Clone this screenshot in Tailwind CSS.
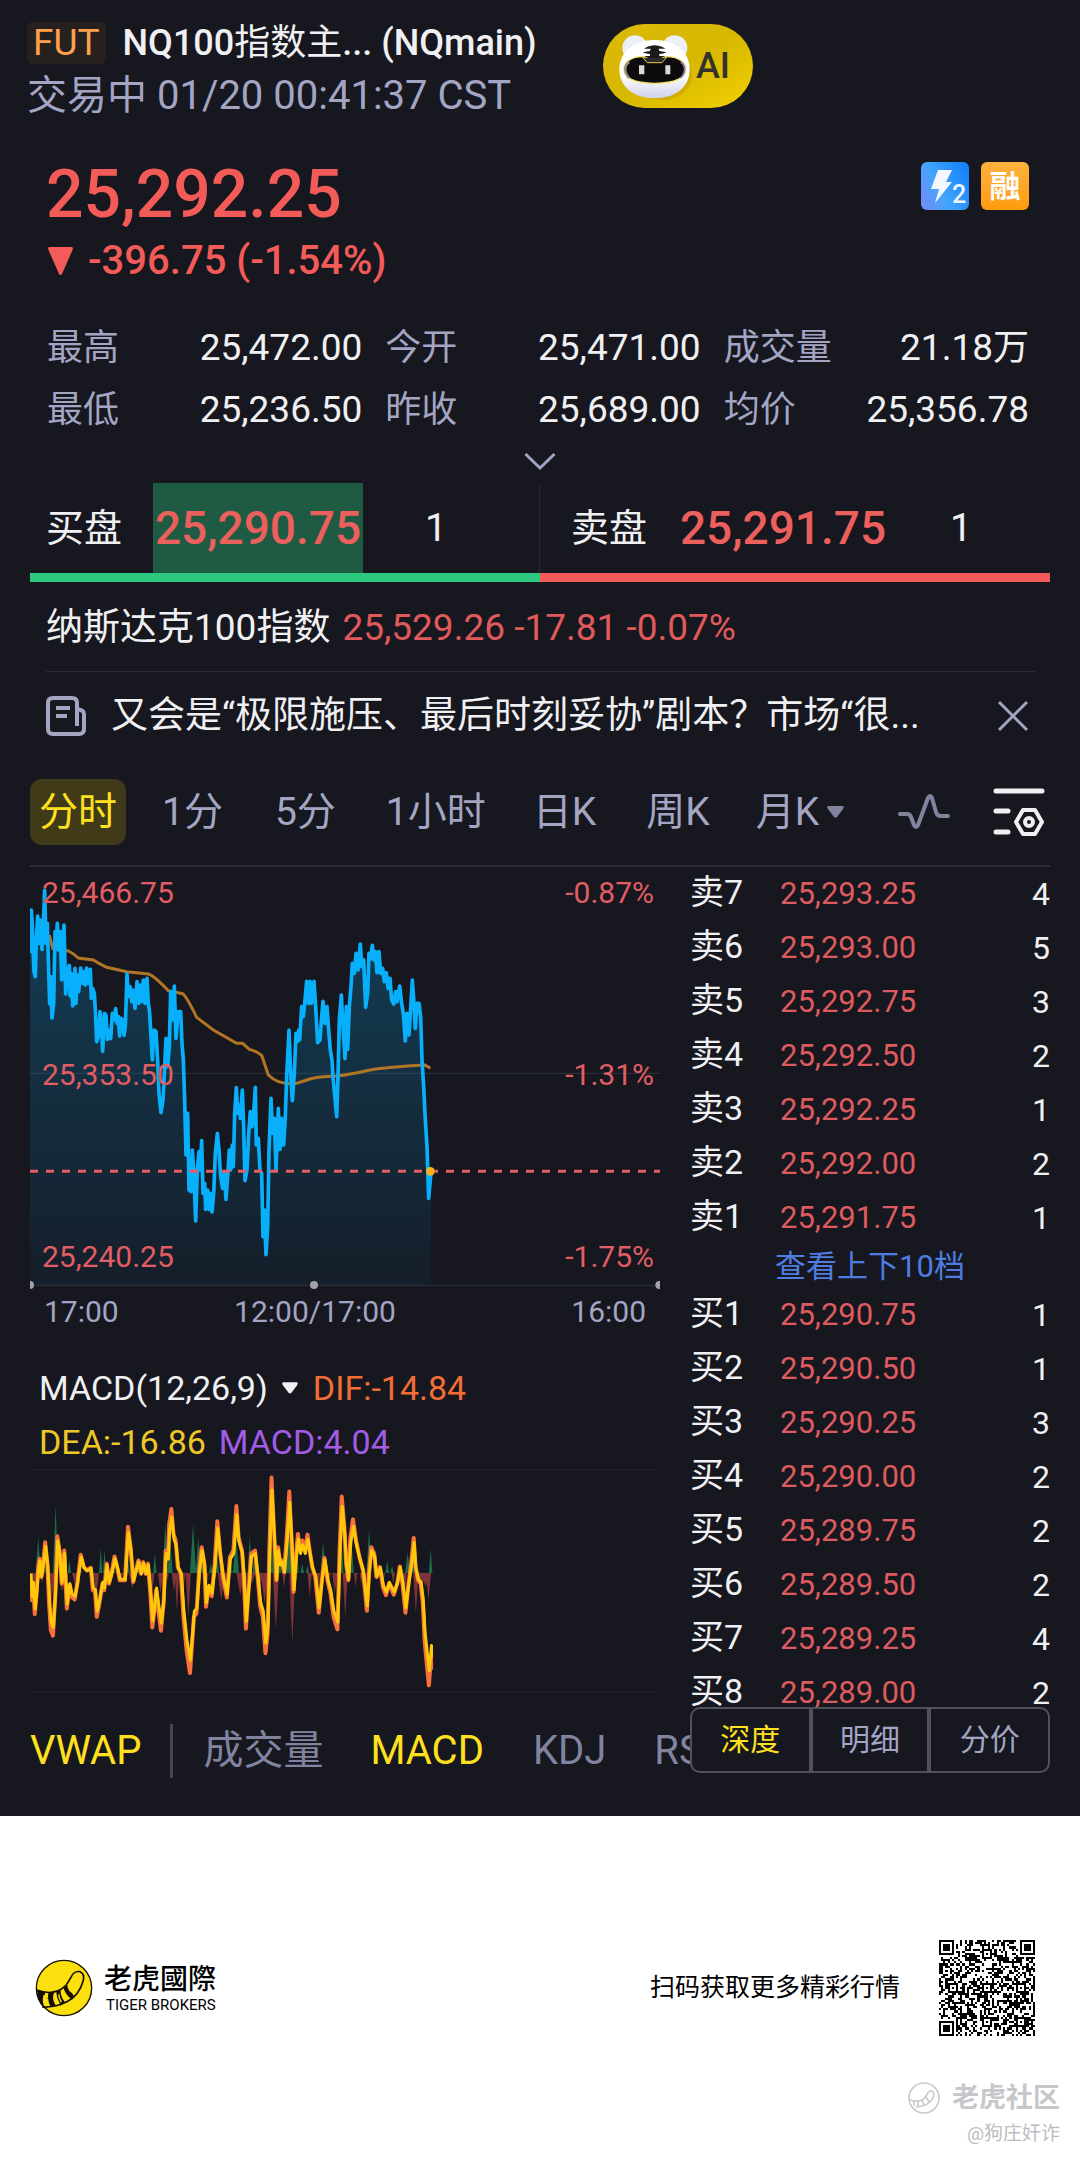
<!DOCTYPE html>
<html lang="zh-CN">
<head>
<meta charset="utf-8">
<meta name="viewport" content="width=device-width, initial-scale=1">
<title>NQ100指数主连 (NQmain)</title>
<script src="https://cdn.jsdelivr.net/npm/@tailwindcss/browser@4"></script>
</head>
<body class="bg-white font-[Roboto,'Noto_Sans_CJK_SC',sans-serif] text-[#f0f0f3]">
<main class="bg-[#16171f] pb-[6px]">

  <!-- Header -->
  <header class="relative px-[27px] pt-5">
    <h1 class="flex h-[46px] items-center gap-[17px] text-[36px] leading-[46px] font-medium">
      <span class="rounded-md bg-[#26211f] px-[6px] text-[37px] leading-[42px] font-normal text-[#ffa04c]">FUT</span>
      <span>NQ100<span class="font-normal">指数主</span>... (NQmain)</span>
    </h1>
    <p class="mt-[5px] text-[40px] leading-[50px] text-[#a3a5c3]">交易中 01/20 00:41:37 CST</p>
    <button class="absolute top-6 left-[603px] flex h-[84px] w-[150px] items-center rounded-full bg-linear-to-br from-[#dcb90a] via-[#d6b800] to-[#f3d000] pl-[14px]" aria-label="AI">
      <svg class="h-[68px] w-[75px]" viewBox="113 98 225 204" aria-hidden="true">
        <defs>
          <linearGradient id="face" x1="0" y1="0" x2="0" y2="1"><stop offset=".6" stop-color="#fff"/><stop offset="1" stop-color="#cfd2ea"/></linearGradient>
        </defs>
        <ellipse cx="250" cy="225" rx="88" ry="78" fill="#b98b00" opacity=".35"/>
        <circle cx="167" cy="146" r="38" fill="#eceef8"/><circle cx="286" cy="146" r="38" fill="#eceef8"/>
        <path d="M226 122c-62 0-106 36-106 88 0 54 44 87 106 87s105-33 105-87c0-52-43-88-105-88z" fill="url(#face)"/>
        <path d="M134 210c0-22 22-38 56-38h72c34 0 57 16 57 38 0 25-30 42-93 42s-92-17-92-42z" fill="#0d0b0c" stroke="#f5e06a" stroke-width="4"/>
        <path d="M190 174h72l-14 16h-44z" fill="#2a2a2e" stroke="#e8cf3c" stroke-width="3"/>
        <path d="M204 142q22-9 44 0l10 6h-20l2 7 22 4q-10 5-22 5v6h18l-14 6h-36l-14-6h18v-6q-12 0-22-5l22-4 2-7h-20z" fill="#1a1a1c"/>
        <path d="M150 188q-12 8-12 22t12 26" fill="none" stroke="#8f8f94" stroke-width="7"/>
        <path d="M304 188q12 8 12 22t-12 26" fill="none" stroke="#8a7bb0" stroke-width="5"/>
        <path d="M179 198h16v27h-16zM258 198h15v27h-15z" fill="#d9d9dd"/>
      </svg>
      <span class="ml-1 text-[36px] leading-[44px] font-medium text-[#33322c]">AI</span>
    </button>
  </header>

  <!-- Last price -->
  <section class="flex items-start justify-between pt-[37px] pr-[51px] pl-[46px] font-medium text-[#f25b58]">
    <div>
      <p class="text-[66px] leading-[73px]">25,292.25</p>
      <p class="mt-[6px] flex items-center text-[40px] leading-[48px]">
        <svg class="mr-[15px] ml-[2px] h-[28px] w-[25px]" viewBox="0 0 25 28" fill="currentColor" aria-hidden="true"><path d="M2 0h21q3 0 1.500 3L14 27q-1.500 2-3 0L.5 3Q-1 0 2 0z"/></svg>
        -396.75 (-1.54%)
      </p>
    </div>
    <div class="mt-1 flex gap-3">
      <svg class="size-12" viewBox="0 0 48 48" role="img" aria-label="Level 2">
        <defs><linearGradient id="lv" x1="0" y1=".8" x2="1" y2=".3"><stop offset="0" stop-color="#6f8df8"/><stop offset=".4" stop-color="#43a6fb"/><stop offset="1" stop-color="#1683fb"/></linearGradient></defs>
        <rect width="48" height="48" rx="6" fill="url(#lv)"/>
        <path d="M17 8h14l-6 12h6L14 41l4-14h-8z" fill="#f3f8ff"/>
        <text x="31" y="41" font-size="25" font-weight="500" fill="#eef5ff">2</text>
      </svg>
      <span class="flex size-12 items-center justify-center rounded-md bg-linear-to-b from-[#fdb13c] to-[#ff9c08] text-[31px] leading-none font-bold text-white">融</span>
    </div>
  </section>

  <!-- Key figures -->
  <dl class="mt-[32px] grid grid-cols-[316fr_316fr_306fr] gap-x-[23px] pr-[51px] pl-[47px] text-[37px] leading-[62px]">
    <div class="flex justify-between"><dt class="text-[36px] text-[#a3a5c3]">最高</dt><dd>25,472.00</dd></div>
    <div class="flex justify-between"><dt class="text-[36px] text-[#a3a5c3]">今开</dt><dd>25,471.00</dd></div>
    <div class="flex justify-between"><dt class="text-[36px] text-[#a3a5c3]">成交量</dt><dd>21.18<span class="text-[36px]">万</span></dd></div>
    <div class="flex justify-between"><dt class="text-[36px] text-[#a3a5c3]">最低</dt><dd>25,236.50</dd></div>
    <div class="flex justify-between"><dt class="text-[36px] text-[#a3a5c3]">昨收</dt><dd>25,689.00</dd></div>
    <div class="flex justify-between"><dt class="text-[36px] text-[#a3a5c3]">均价</dt><dd>25,356.78</dd></div>
  </dl>
  <button class="flex h-[42px] w-full items-center justify-center" aria-label="展开">
    <svg class="h-[20px] w-[32px]" viewBox="0 0 32 20" fill="none" stroke="#a3a5c3" stroke-width="3" aria-hidden="true"><path d="M1.500 2 16 16 30.500 2"/></svg>
  </button>

  <!-- Best bid / ask -->
  <section class="mx-[30px] grid grid-cols-2">
    <div class="flex h-[90px] items-center border-r border-[#282932] pl-4 text-[38px] leading-[48px]">
      <span>买盘</span>
      <strong class="ml-[31px] flex h-full w-[210px] items-center justify-center bg-[#1f5b42] text-[46px] font-medium text-[#eb5f5c]">25,290.75</strong>
      <span class="ml-[62px] text-[39px]">1</span>
    </div>
    <div class="flex h-[90px] items-center pl-[31px] text-[38px] leading-[48px]">
      <span>卖盘</span>
      <strong class="ml-[31px] flex h-full w-[210px] items-center justify-center text-[46px] font-medium text-[#eb5f5c]">25,291.75</strong>
      <span class="ml-[62px] text-[39px]">1</span>
    </div>
    <div class="h-[9px] bg-[#2cc880]"></div>
    <div class="h-[9px] bg-[#f25b58]"></div>
  </section>

  <!-- Index and news -->
  <section class="mr-[45px] ml-[46px] text-[37px] leading-[48px]">
    <p class="flex h-[90px] items-center gap-3 border-b border-[#2a2b34] pt-[2px]">
      <span>纳斯达克100指数</span><span class="text-[#e05a5b]">25,529.26 -17.81 -0.07%</span>
    </p>
    <div class="flex h-[87px] items-center">
      <svg class="h-[40px] w-[40px] shrink-0" viewBox="0 0 40 40" fill="none" stroke="#a3a5c3" stroke-width="4" aria-hidden="true"><path d="M31 30V7q0-5-5-5H7Q2 2 2 7v26q0 5 5 5h26q5 0 5-5V18q0-4-7-5"/><path d="M10 12h14M10 20h11"/></svg>
      <a href="#" class="ml-[25px] truncate">又会是“极限施压、最后时刻妥协”剧本？市场“很...</a>
      <button class="mr-[6px] ml-auto" aria-label="关闭"><svg class="size-[32px]" viewBox="0 0 32 32" stroke="#a3a5c3" stroke-width="3" aria-hidden="true"><path d="M2 2l28 28M30 2 2 30"/></svg></button>
    </div>
  </section>

  <!-- Period tabs -->
  <nav class="mx-[30px] flex h-[108px] items-center border-b-2 border-[#2c2d35] text-[39px] leading-[50px] text-[#a3a5c3]">
    <button class="mr-[11px] h-[66px] rounded-xl bg-[#403a19] px-[9px] text-[#ffe01e]">分时</button>
    <button class="px-[25px]">1分</button>
    <button class="px-[27px]">5分</button>
    <button class="px-[23px]">1小时</button>
    <button class="px-[24px]">日K</button>
    <button class="px-[26px]">周K</button>
    <button class="flex items-center gap-[8px] pl-5">月K
      <svg class="h-[12px] w-[17px]" viewBox="0 0 17 12" fill="#82849f" aria-hidden="true"><path d="M2 0h13q3 0 1 3l-6 8q-1.500 1.500-3 0L1 3Q-1 0 2 0z"/></svg>
    </button>
    <button class="ml-auto" aria-label="画线"><svg class="h-[36px] w-[52px]" viewBox="0 0 52 36" fill="none" stroke="#82849f" stroke-width="4" stroke-linejoin="round" stroke-linecap="round" aria-hidden="true"><path d="M2 20h7q3 0 4 3l3 8q2 4 4 0L30 4q2-4 4 0l4 14q1 4 5 4h7"/></svg></button>
    <button class="mr-[5px] ml-[43px]" aria-label="设置"><svg class="h-[49px] w-[52px]" viewBox="0 0 52 49" fill="none" stroke="#f0f0f3" stroke-width="5" stroke-linecap="round" aria-hidden="true"><path d="M3 3h46M3 23h12M3 44h12"/><path d="M30 22h12l7 12-7 12H30l-7-12z" stroke-width="4" stroke-linejoin="round"/><circle cx="36" cy="34" r="4" stroke-width="4"/></svg></button>
  </nav>

  <div class="grid grid-cols-[660fr_360fr] px-[30px]">
    <!-- Charts -->
    <section class="min-w-0">
      <div class="relative mr-[30px] h-[423px] text-[30px] leading-[36px] text-[#e25d64]">
        <svg class="absolute inset-0 h-full w-full" viewBox="30 21 1890 1269" preserveAspectRatio="none" fill="none" role="img" aria-label="分时走势">
          <defs><linearGradient id="area" gradientUnits="userSpaceOnUse" x1="0" y1="100" x2="0" y2="1276"><stop offset="0" stop-color="#08a7ee" stop-opacity=".27"/><stop offset="1" stop-color="#08a7ee" stop-opacity=".05"/></linearGradient></defs>
          <path d="M30 640H1920M30 1276H1920" stroke="#2f343b" stroke-width="3"/>
          <path id="price-area" fill="url(#area)"/>
          <path d="M88 225 98 265 145 273Q160 280 175 294L220 300Q235 310 260 322L320 335 385 342Q400 345 445 392L488 401Q500 410 530 472L580 510 650 550H668L688 568Q712 574 725 586L745 645Q775 676 830 670L860 660Q885 650 950 648 990 644 1050 630 1100 621 1215 615L1231 625" stroke="#b27526" stroke-width="9"/>
          <path id="price-line" stroke="#08b0fc" stroke-width="11" stroke-linejoin="round"/>
          <path d="M30 934H1920" stroke="#e25d64" stroke-width="9" stroke-dasharray="24 24"/>
          <circle cx="1231" cy="934" r="13" fill="#fdb01d"/>
          <g fill="#a2a3a8"><circle cx="30" cy="1275" r="12"/><circle cx="882" cy="1275" r="12"/><circle cx="1918" cy="1275" r="12"/></g>
        </svg>
        <div class="relative flex h-full flex-col justify-between pt-[8px] pr-[6px] pb-[15px] pl-3">
          <p class="flex justify-between"><span>25,466.75</span><span>-0.87%</span></p>
          <p class="flex justify-between"><span>25,353.50</span><span>-1.31%</span></p>
          <p class="flex justify-between"><span>25,240.25</span><span>-1.75%</span></p>
        </div>
      </div>
      <div class="mr-[30px] grid grid-cols-[1fr_auto_1fr] pt-1 pr-[14px] pl-[14px] text-[30px] leading-[36px] text-[#a3a5c3]">
        <span>17:00</span><span class="pr-[60px]">12:00/17:00</span><span class="text-right">16:00</span>
      </div>

      <div class="mt-[31px] flex h-[54px] items-center pl-[9px] text-[34px] leading-[54px]">
        <button class="flex items-center gap-[14px]">MACD(12,26,9)
          <svg class="h-[12px] w-[16px]" viewBox="0 0 17 12" fill="currentColor" aria-hidden="true"><path d="M2 0h13q3 0 1 3l-6 8q-1.500 1.500-3 0L1 3Q-1 0 2 0z"/></svg>
        </button>
        <span class="ml-[15px] text-[#f36d35]">DIF:-14.84</span>
      </div>
      <div class="flex h-[54px] items-center gap-[13px] pl-[9px] text-[34px] leading-[54px]">
        <span class="text-[#edc827]">DEA:-16.86</span><span class="text-[#a25ce6]">MACD:4.04</span>
      </div>
      <div class="mr-[30px] h-[223px] border-y border-[#20212a]">
        <svg class="h-full w-full" viewBox="69 357 1453 667" preserveAspectRatio="none" fill="none" role="img" aria-label="MACD">
          <path id="hist-up" fill="#1c6b49"/><path id="hist-down" fill="#7d3338"/>
          <path id="dif" stroke="#f8703a" stroke-width="4" vector-effect="non-scaling-stroke" stroke-linejoin="round"/>
          <path id="dea" stroke="#ffc90a" stroke-width="3" vector-effect="non-scaling-stroke" stroke-linejoin="round"/>
        </svg>
      </div>

      <nav class="flex h-[118px] items-center overflow-hidden text-[40px] leading-[50px] whitespace-nowrap text-[#82849f]">
        <button class="text-[#ffe01e]">VWAP</button>
        <span class="mr-[30px] ml-[29px] h-[54px] w-[3px] shrink-0 bg-[#45464e]"></span>
        <button>成交量</button>
        <button class="ml-[47px] text-[#ffe01e]">MACD</button>
        <button class="ml-[49px]">KDJ</button>
        <button class="ml-[48px]">RSI</button>
      </nav>
    </section>

    <!-- Order book -->
    <section class="flex flex-col">
      <div class="h-[840px] overflow-hidden">
        <table class="w-full table-fixed border-collapse leading-[54px]">
          <colgroup><col class="w-[90px]"><col><col class="w-[60px]"></colgroup>
          <tbody id="book"></tbody>
        </table>
      </div>
      <div class="grid h-[66px] grid-cols-3 rounded-[10px] border-2 border-[#50515d] text-[30px] leading-[40px] text-[#a3a5c3]">
        <button class="border-r-2 border-[#50515d] text-[#ffe01e]">深度</button>
        <button class="border-x-2 border-[#50515d]">明细</button>
        <button class="border-l-2 border-[#50515d]">分价</button>
      </div>
    </section>
  </div>
</main>

<!-- Share footer -->
<footer class="pr-[20px] pl-[35px] text-black">
  <div class="flex items-center pt-[124px] pr-[25px]">
    <svg class="size-[58px]" viewBox="106 115 176 176" fill="none" stroke="#140d05" aria-hidden="true">
      <circle cx="194" cy="203" r="84" fill="#fbe00d" stroke-width="4"/>
      <path d="M111 209q55 20 88-13 8-10 16-25 8-20 26-18 17 6 11 29-12 44-48 62-33 18-76 17" stroke-width="5"/>
      <path d="M112 208l25 9q-5 14 8 18-10 14-4 28l-12-4q-14-16-17-51zM147 217l17-2q-8 22 5 41l-16 4q-11-24-6-43zM171 213l13-5q-2 20 13 38l-14 7q-13-22-12-40zM193 204l11-10q2 18 14 24l6 9-10 8q-16-13-21-31z" fill="#140d05" stroke="none"/>
      <path d="M132 224l8 1q-1 9 6 12-7 9-5 22l-8-2q-6-16-1-33zM176 222l4-1q1 14 8 23l-4 3q-8-12-8-25z" fill="#fbe00d" stroke="none"/>
    </svg>
    <div class="ml-[11px]">
      <p class="text-[28px] leading-[34px] font-medium">老虎國際</p>
      <p class="pl-[2px] text-[15px] leading-[16px]">TIGER BROKERS</p>
    </div>
    <p class="ml-auto text-[25px] leading-[36px]">扫码获取更多精彩行情</p>
    <svg id="qr" class="ml-[39px] size-[96px]" viewBox="0 0 45 45" shape-rendering="crispEdges" role="img" aria-label="二维码"><path fill="#000"/></svg>
  </div>
  <div class="mt-[44px] flex items-center justify-end gap-3 text-[27px] leading-[36px] font-bold text-[#c6c7cb]">
    <svg class="size-[32px]" viewBox="0 0 32 32" fill="none" stroke="currentColor" stroke-width="1.500" aria-hidden="true"><circle cx="16" cy="16" r="15"/><path d="M2 18q11 4 16-4 3-6 6-5 3 2 1 7-4 8-17 9M6 19v5M10 20v4M14 18l2 5M18 15l3 5"/></svg>
    <span>老虎社区</span>
  </div>
  <p class="mt-[2px] text-right text-[19px] leading-[32px] text-[#bcbdc1]">@狗庄奸诈</p>
</footer>

<script>
const $ = id => document.getElementById(id);

// Order book rows: label, price, size
const asks = [['卖7','25,293.25',4],['卖6','25,293.00',5],['卖5','25,292.75',3],['卖4','25,292.50',2],['卖3','25,292.25',1],['卖2','25,292.00',2],['卖1','25,291.75',1]];
const bids = [['买1','25,290.75',1],['买2','25,290.50',1],['买3','25,290.25',3],['买4','25,290.00',2],['买5','25,289.75',2],['买6','25,289.50',2],['买7','25,289.25',4],['买8','25,289.00',2]];
const row = ([l, p, n]) => `<tr class="h-[54px]"><th scope="row" class="p-0 text-left align-top text-[34px] leading-[50px] font-normal">${l}</th><td class="p-0 text-[31px] text-[#dd5b5e]">${p}</td><td class="p-0 text-right text-[32px]">${n}</td></tr>`;
$('book').innerHTML = asks.map(row).join('')
  + '<tr class="h-[43px]"><td colspan="3" class="p-0 text-center text-[31px] leading-[43px] text-[#4f7ce0]"><a href="#">查看上下10档</a></td></tr>'
  + bids.map(row).join('');

const line = pts => 'M' + pts.map(p => p.join(' ')).join('L');

// Intraday price
const price = [[32,280],[34,150],[37,200],[40,280],[42,335],[46,350],[49,240],[53,168],[57,250],[61,180],[66,268],[70,190],[74,92],[78,250],[82,190],[86,330],[89,432],[92,350],[96,474],[101,430],[105,215],[108,270],[112,190],[117,270],[121,215],[125,360],[129,240],[132,195],[137,402],[142,330],[148,316],[150,408],[154,340],[158,438],[162,430],[165,325],[168,430],[172,345],[176,395],[182,324],[188,370],[192,335],[196,375],[200,324],[206,370],[211,328],[214,415],[218,385],[223,400],[226,450],[230,545],[235,530],[240,455],[244,500],[248,574],[253,460],[258,465],[262,538],[268,510],[272,536],[277,460],[282,480],[287,446],[291,490],[295,470],[299,528],[303,475],[308,480],[312,526],[316,500],[321,342],[325,410],[330,380],[335,425],[339,390],[345,445],[351,365],[356,430],[361,375],[365,425],[370,360],[375,430],[381,355],[385,430],[389,460],[393,530],[397,600],[402,510],[408,515],[413,600],[417,700],[423,758],[429,720],[433,640],[438,535],[443,620],[448,560],[452,395],[457,480],[463,378],[468,535],[474,455],[482,455],[486,550],[490,600],[494,720],[498,885],[503,760],[507,990],[513,995],[517,870],[521,930],[527,1083],[532,930],[537,875],[541,930],[545,842],[549,1000],[554,970],[557,1048],[563,990],[567,1048],[571,1000],[576,1056],[581,1000],[586,880],[592,820],[597,870],[602,950],[608,985],[613,940],[618,1018],[623,950],[628,870],[632,930],[637,855],[640,920],[644,760],[649,683],[653,760],[659,735],[661,775],[667,690],[671,800],[675,962],[681,930],[686,820],[691,755],[696,800],[701,760],[706,682],[709,855],[715,835],[720,930],[725,940],[729,1130],[733,1050],[738,1184],[743,1100],[747,870],[753,715],[758,820],[763,775],[768,930],[775,745],[780,868],[785,775],[791,855],[796,770],[800,650],[807,510],[812,640],[817,722],[823,640],[828,520],[832,545],[836,510],[839,540],[845,440],[850,470],[855,420],[860,364],[865,430],[870,364],[874,430],[882,364],[887,440],[893,548],[900,540],[905,470],[909,424],[915,490],[921,440],[926,510],[931,570],[936,600],[939,650],[944,705],[950,770],[954,650],[958,480],[964,405],[968,480],[975,596],[979,440],[983,568],[988,440],[993,380],[997,310],[1003,340],[1008,280],[1014,330],[1021,252],[1025,320],[1031,300],[1037,442],[1043,400],[1047,280],[1051,298],[1057,256],[1062,300],[1066,275],[1071,338],[1077,275],[1082,340],[1088,325],[1093,365],[1099,338],[1104,385],[1110,355],[1115,420],[1121,432],[1127,395],[1131,425],[1139,378],[1145,430],[1150,460],[1156,543],[1161,460],[1167,525],[1173,430],[1177,360],[1182,430],[1186,505],[1191,430],[1197,430],[1202,470],[1206,600],[1211,680],[1216,780],[1221,860],[1226,1015],[1231,960],[1233,935]];
$('price-line').setAttribute('d', line(price));
$('price-area').setAttribute('d', line(price) + 'L1233 1276H30V280Z');

// MACD
const zero = 668;
const dif = [[70,670],[73,750],[76,700],[80,792],[84,730],[88,650],[91,625],[95,680],[99,640],[104,575],[109,640],[113,760],[117,840],[122,857],[127,740],[132,557],[137,600],[142,700],[148,600],[151,700],[154,775],[160,705],[165,740],[172,748],[178,700],[186,613],[193,650],[200,660],[209,652],[214,720],[219,725],[223,800],[229,760],[236,700],[240,720],[246,640],[251,700],[256,675],[264,618],[270,650],[276,690],[288,690],[295,528],[301,590],[307,695],[313,660],[319,630],[325,670],[330,635],[336,670],[341,640],[347,740],[351,832],[356,780],[360,720],[365,780],[371,842],[377,760],[382,600],[387,620],[390,520],[395,475],[400,550],[405,570],[410,650],[417,670],[423,800],[430,900],[438,970],[444,860],[447,800],[453,790],[459,660],[465,590],[471,640],[475,770],[481,710],[488,738],[495,640],[501,512],[507,600],[514,680],[523,742],[530,620],[538,600],[545,466],[550,560],[558,600],[562,680],[567,836],[573,720],[579,610],[588,600],[594,680],[600,770],[606,800],[612,910],[617,850],[621,600],[626,380],[631,520],[637,690],[641,590],[646,640],[650,630],[655,665],[661,560],[667,422],[672,560],[677,725],[682,620],[687,550],[692,600],[697,570],[703,600],[709,552],[714,600],[720,650],[727,680],[735,788],[742,690],[748,622],[755,690],[762,730],[769,800],[778,838],[783,600],[788,437],[794,530],[798,640],[803,690],[808,560],[814,506],[821,570],[829,620],[837,660],[846,782],[851,660],[856,590],[863,610],[868,680],[876,650],[883,710],[890,735],[897,700],[908,733],[916,700],[922,648],[928,700],[935,788],[942,700],[948,640],[954,562],[958,650],[964,690],[970,700],[975,760],[979,870],[984,940],[989,1007],[994,920],[994,960]];
$('dif').setAttribute('d', line(dif));
$('dea').setAttribute('d', line(dif.map(([x, y]) => [x + 1, Math.round(zero + (y - zero) * 0.87)])));
const spikes = list => list.map(([x, y, w = 4]) => `M${x - w} ${zero}L${x} ${y}L${x + w} ${zero}Z`).join('');
$('hist-up').setAttribute('d', spikes([[88,560,6],[101,590],[128,462,6],[150,610],[160,630],[184,625],[232,592],[241,598],[262,640],[293,600,6],[320,635],[357,610],[381,515,6],[392,560,6],[445,520,7],[457,560,6],[465,600],[486,640],[499,590,6],[530,610,6],[544,560,7],[576,555,5],[586,620],[624,520,8],[645,610],[665,500,7],[685,600],[697,640],[709,645],[745,575,6],[786,530,6],[812,600],[851,535,6],[893,630],[904,645],[921,640],[940,605,6],[951,610],[993,595,4]]));
$('hist-down').setAttribute('d', spikes([[78,740,6],[97,700],[118,760,8],[143,725,8],[152,795,5],[172,700,6],[212,700],[222,740,6],[280,695],[305,715,8],[350,750,6],[370,730,6],[385,690],[401,725,5],[408,785,5],[420,740,8],[434,800,6],[475,720,6],[510,750,8],[523,710,6],[554,735,9],[565,760,6],[580,700,9],[598,720,9],[610,760,9],[636,840,7],[655,710],[674,880,7],[714,740,5],[732,750,6],[757,700,6],[772,730,6],[796,800,6],[820,710],[833,700],[845,740,5],[868,690],[882,710,6],[907,700],[933,740,5],[959,790,6],[972,720,8],[981,710,9],[988,750,6]]));

// QR code, 45 modules a side
let seed = 20260120;
const rnd = () => (seed = (seed * 1103515245 + 12345) & 0x7fffffff) / 0x7fffffff;
const grid = Array.from({ length: 45 }, () => Array.from({ length: 45 }, () => rnd() > 0.5));
const mark = (cx, cy, r, rings) => {
  for (let y = -r; y <= r; y++) for (let x = -r; x <= r; x++) {
    if (grid[cy + y] && cx + x >= 0 && cx + x < 45) grid[cy + y][cx + x] = rings[Math.max(Math.abs(x), Math.abs(y))];
  }
};
[[22,22],[22,38],[38,22],[38,38],[6,22],[22,6]].forEach(([x, y]) => mark(x, y, 2, [true, false, true]));
[[3,3],[41,3],[3,41]].forEach(([x, y]) => mark(x, y, 4, [true, true, false, true, false]));
document.querySelector('#qr path').setAttribute('d', grid.flatMap((r, y) => r.map((on, x) => on ? `M${x} ${y}h1v1h-1z` : '')).join(''));
</script>
</body>
</html>
